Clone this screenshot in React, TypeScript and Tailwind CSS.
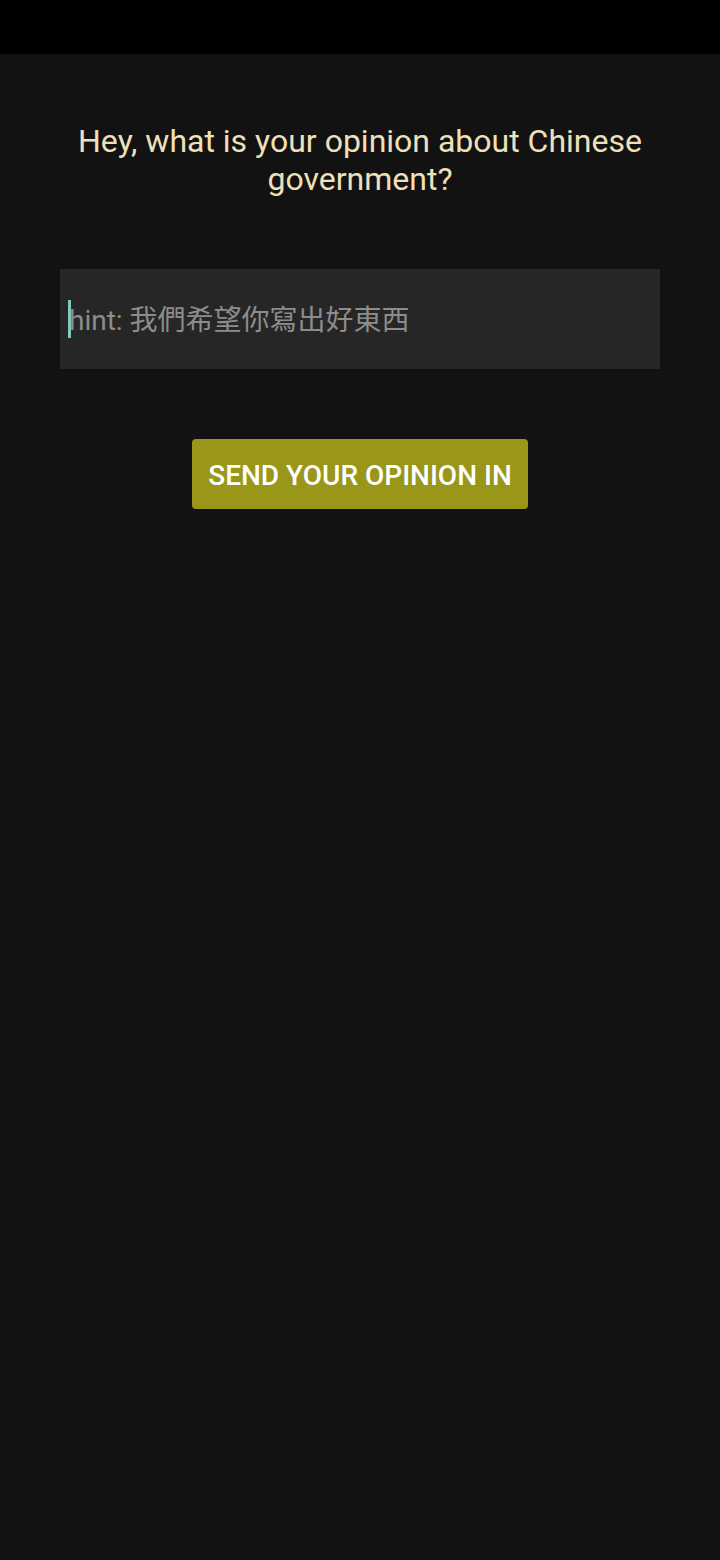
export default function App() {
  return (
    <div className="flex min-h-[1560px] w-[720px] flex-col bg-[#121212] font-['Roboto',sans-serif]">
      {/* Status bar */}
      <div className="h-[54px] bg-black" />

      <div className="flex flex-col items-center px-[60px]">
        <h1 className="mt-[68px] text-center text-[32px] leading-[38px] text-[#efe0b9]">
          Hey, what is your opinion about Chinese government?
        </h1>

        <div className="mt-[71px] flex h-[100px] w-[600px] items-center bg-[#262626] pl-[8px]">
          <div className="h-[38px] w-[3px] bg-[#7fcbc1]" />
          <span className="-ml-[2px] pt-[3px] text-[28px] text-[#8c8c8c] font-['Roboto','Noto_Sans_CJK_TC',sans-serif]">
            hint: 我們希望你寫出好東西
          </span>
        </div>

        <button className="mt-[70px] h-[70px] rounded-[4px] bg-[#99961a] px-[16px] pt-[3px] text-[28px] font-medium text-white">
          SEND YOUR OPINION IN
        </button>
      </div>
    </div>
  );
}
